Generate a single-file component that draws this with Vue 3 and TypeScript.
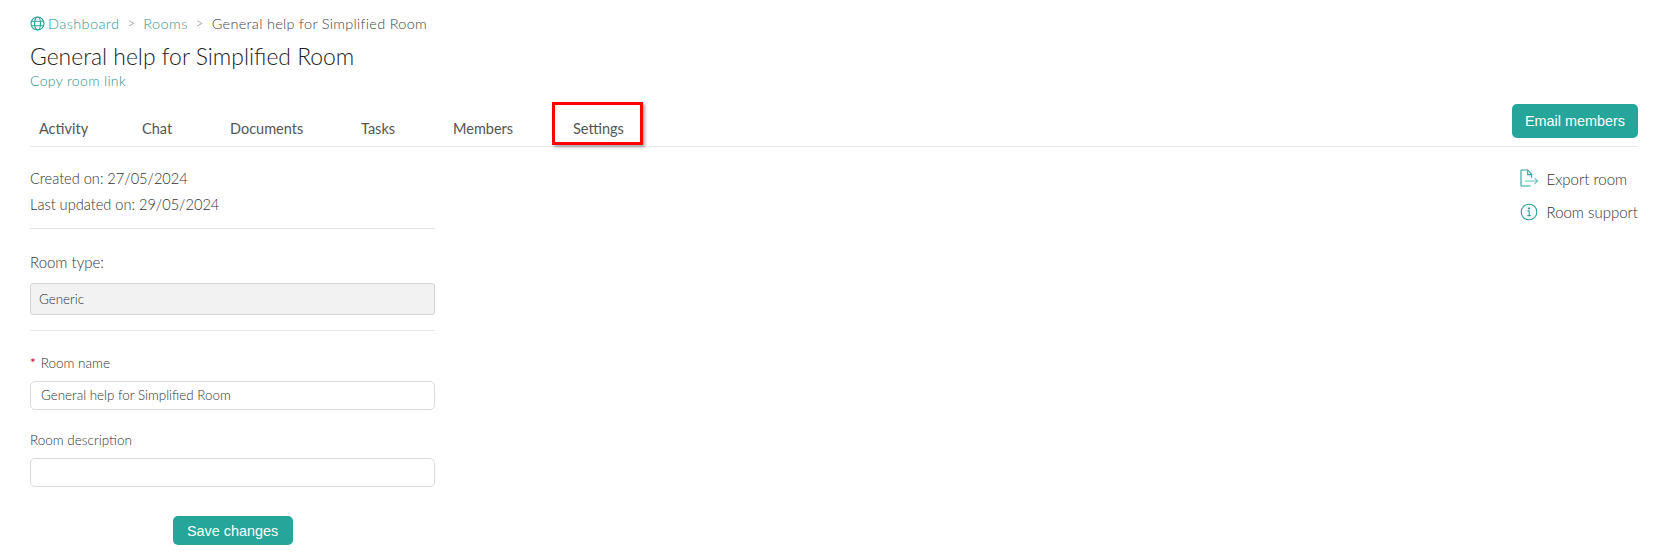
<script setup lang="ts">
const tabs: string[] = ['Activity', 'Chat', 'Documents', 'Tasks', 'Members', 'Settings']
</script>

<template>
  <div class="page">
    <nav class="crumbs">
      <svg class="globe" width="15" height="15" viewBox="0 0 16 16" fill="none" stroke="#26a69a" stroke-width="1.2">
        <circle cx="8" cy="8" r="6.9" />
        <ellipse cx="8" cy="8" rx="3.2" ry="6.9" />
        <path d="M1.6 5.6h12.8M1.6 10.4h12.8" />
      </svg>
      <a class="link">Dashboard</a>
      <span class="sep">&gt;</span>
      <a class="link">Rooms</a>
      <span class="sep">&gt;</span>
      <span class="cur">General help for Simplified Room</span>
    </nav>
    <h1 class="title">General help for Simplified Room</h1>
    <a class="copy">Copy room link</a>

    <div class="tabbar">
      <ul class="tabs">
        <li v-for="t in tabs" :key="t" class="tab">
          {{ t }}
          <span v-if="t === 'Settings'" class="mark"></span>
        </li>
      </ul>
      <button class="btn email">Email members</button>
    </div>

    <div class="body">
      <section class="form">
        <p class="meta first">Created on: 27/05/2024</p>
        <p class="meta">Last updated on: 29/05/2024</p>
        <hr class="rule r1" />
        <p class="type-label">Room type:</p>
        <div class="readonly">Generic</div>
        <hr class="rule r2" />
        <label class="lab"><span class="req">*</span>Room name</label>
        <div class="input">General help for Simplified Room</div>
        <label class="lab second">Room description</label>
        <div class="input"></div>
        <div class="actions"><button class="btn save">Save changes</button></div>
      </section>

      <aside class="side">
        <div class="side-row">
          <svg width="20" height="20" viewBox="0 0 20 20" fill="none" stroke="#26a69a" stroke-width="1.1">
            <path d="M11.5 17H2.6a.6.6 0 0 1-.6-.6V1.6a.6.6 0 0 1 .6-.6h6.2l3.8 4.2v3.6" />
            <path d="M8.7 1.2v4.4h3.9" />
            <path d="M6 12h12.5M15.6 9.2l3 2.8-3 2.8" stroke-opacity=".7" />
          </svg>
          <span>Export room</span>
        </div>
        <div class="side-row">
          <svg width="20" height="20" viewBox="0 0 20 20" fill="none" stroke="#26a69a" stroke-width="1.1">
            <circle cx="10" cy="10" r="7.8" />
            <path d="M8.4 8.9h1.8v4.6M8.3 13.6h3.6" />
            <circle cx="10" cy="6.4" r=".5" fill="#26a69a" />
          </svg>
          <span>Room support</span>
        </div>
      </aside>
    </div>
  </div>
</template>

<style scoped>
.page {
  box-sizing: border-box;
  width: 1672px;
  height: 554px;
  padding: 14px 34px 0 30px;
  font-family: Lato, "Noto Sans", sans-serif;
  font-weight: 400;
  color: #555;
  background: #fff;
  overflow: hidden;
}
.crumbs {
  display: flex;
  align-items: center;
  height: 18px;
  font-size: 14.5px;
  font-weight: 300;
  letter-spacing: 0.4px;
}
.globe { margin-right: 3px; }
.link { color: #2f9a92; }
.sep { color: #888; margin: 0 8px; font-size: 13px; }
.cur { color: #444; letter-spacing: 0.3px; }
.title {
  margin: 9px 0 0;
  font-size: 22.9px;
  line-height: 30px;
  font-weight: 300;
  color: #222;
}
.copy {
  display: block;
  margin-top: 1px;
  font-size: 14px;
  font-weight: 300;
  line-height: 18px;
  color: #2f8f8c;
  letter-spacing: 0.35px;
}
.tabbar {
  display: flex;
  justify-content: space-between;
  align-items: flex-start;
  height: 42px;
  margin-top: 14px;
  border-bottom: 1px solid #e7e7e7;
}
.tabs {
  display: grid;
  grid-template-columns: 103px 88px 131px 92px 120px auto;
  list-style: none;
  margin: 0;
  padding: 0;
}
.tab {
  position: relative;
  padding: 15px 0 0 9px;
  font-size: 14.5px;
  line-height: 20px;
  color: #555;
}
.mark {
  position: absolute;
  left: -12px;
  top: -2px;
  width: 85px;
  height: 37px;
  border: 3px solid #f00;
  box-shadow: 2px 2px 3px rgba(0, 0, 0, 0.35);
}
.btn {
  border: none;
  color: #fff;
  background: #26a69a;
  font-family: "Liberation Sans", Arial, sans-serif;
  font-size: 14.4px;
  padding: 0;
}
.email {
  width: 126px;
  height: 34px;
  border-radius: 5px;
}
.body {
  display: flex;
  justify-content: space-between;
}
.form { width: 405px; }
.meta {
  margin: 0;
  font-size: 14.6px;
  font-weight: 300;
  line-height: 26px;
  color: #333;
}
.meta.first { margin-top: 19px; }
.rule {
  border: 0;
  border-top: 1px solid #e7e7e7;
  margin: 0;
}
.r1 { margin-top: 10px; }
.type-label {
  margin: 23px 0 0;
  font-size: 15px;
  font-weight: 300;
  line-height: 20px;
  color: #333;
}
.readonly {
  box-sizing: border-box;
  height: 32px;
  margin-top: 11px;
  padding: 0 8px;
  line-height: 30px;
  font-size: 13.4px;
  font-weight: 300;
  background: #f2f2f2;
  border: 1px solid #d5d5d5;
  border-radius: 3px;
  color: #333;
}
.r2 { margin-top: 15px; }
.lab {
  display: block;
  margin-top: 22px;
  font-size: 13.5px;
  font-weight: 300;
  line-height: 20px;
  color: #333;
}
.lab.second { margin-top: 20px; }
.req { color: #c00033; margin-right: 5px; font-weight: 400; }
.input {
  box-sizing: border-box;
  height: 29px;
  margin-top: 8px;
  padding: 0 10px;
  line-height: 27px;
  font-size: 13.4px;
  font-weight: 300;
  border: 1px solid #dcdcdc;
  border-radius: 5px;
  color: #333;
}
.actions {
  display: flex;
  justify-content: center;
  margin-top: 29px;
}
.save {
  width: 120px;
  height: 29px;
  border-radius: 5px;
}
.side {
  display: flex;
  flex-direction: column;
  align-items: flex-start;
  margin-top: 22px;
}
.side-row {
  display: flex;
  align-items: center;
  height: 20px;
  margin-bottom: 13px;
  gap: 8px;
  font-size: 15px;
  font-weight: 300;
  color: #333;
}
</style>
